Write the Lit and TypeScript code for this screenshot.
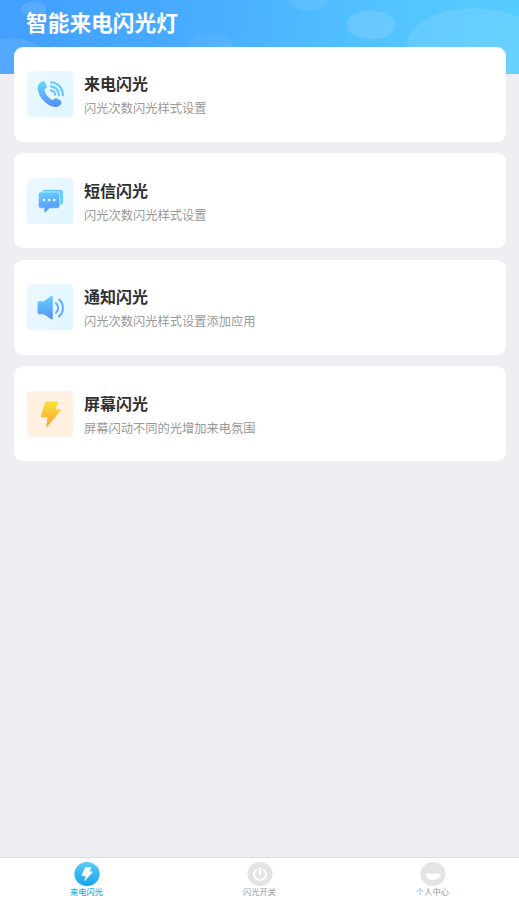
import { LitElement, html, svg, css } from "lit";
import { customElement, property, state } from "lit/decorators.js";
import { classMap } from "lit/directives/class-map.js";

type IconName = "phone" | "message" | "speaker" | "bolt";

const blueGradient = (id: string) => svg`
  <linearGradient id=${id} gradientUnits="userSpaceOnUse" x1="20" y1="9" x2="24" y2="37">
    <stop offset="0" stop-color="#68d9fc"/><stop offset="1" stop-color="#548bfa"/>
  </linearGradient>`;

const icons = {
  phone: svg`
    <defs>${blueGradient("g")}</defs>
    <path fill="url(#g)" d="M15.5 10.5C16.8 10 17.8 10.3 18.2 11.4L19.7 14.7C20.1 16 19.6 17 18.5 17.8C17.4 18.5 17.4 19.3 17.9 20.7C19.2 23.9 21.2 26.4 24 28.3C25.2 29.1 26.2 29 27.1 28.1C28.3 27 29.3 26.9 30.7 27.7L33.5 29.6C34.6 30.3 34.8 31.8 34.1 32.9C32.3 35.7 28.6 36.8 25.3 35.6C18.1 33 11.9 25.8 10.7 18.5C10.1 14.8 12.2 11.7 15.5 10.5Z"/>
    <g fill="none" stroke="#69c9fc" stroke-width="2.3" stroke-linecap="round">
      <path d="M24.2 11.3C30.7 11.5 35.8 17 35.8 24.2"/>
      <path d="M24 15.3C28.5 15.7 31.9 19.3 31.9 24.2"/>
      <path d="M24 19.3C26.4 19.7 28 21.3 28 23.8"/>
    </g>`,
  message: svg`
    <defs>${blueGradient("g")}</defs>
    <path fill="#67cafa" d="M17.7 11.8H33.4Q36 11.8 36 14.4V24Q36 26.6 33.5 26.8L29.5 27L15 18V14.5Q15 11.8 17.7 11.8Z"/>
    <path fill="url(#g)" stroke="#e3f6ff" stroke-width=".6" d="M14 13.9H30.2Q32.8 13.9 32.8 16.5V27.7Q32.8 30.3 30.2 30.3H22.9L18.4 34.3Q17.1 35.3 17.1 33.6V30.3H14Q11.4 30.3 11.4 27.7V16.5Q11.4 13.9 14 13.9Z"/>
    <g fill="#eefbff"><circle cx="16.8" cy="22" r="1.35"/><circle cx="22" cy="22" r="1.35"/><circle cx="27.2" cy="22" r="1.35"/></g>`,
  speaker: svg`
    <defs>${blueGradient("g")}</defs>
    <path fill="url(#g)" d="M12 17.3H16.7L24 12.3Q25.8 11.1 25.8 13V34.2Q25.8 36.2 24 35.1L16.7 30.2H12Q10.5 30.2 10.5 28.7V18.8Q10.5 17.3 12 17.3Z"/>
    <g fill="none" stroke="#65adfb" stroke-width="2.1" stroke-linecap="round">
      <path d="M29 19.2C31.8 21.7 31.8 26.1 29 28.7"/>
      <path d="M32 15.5C37.2 19.7 37.2 28 32 32.4"/>
    </g>`,
  bolt: svg`
    <defs><linearGradient id="g" x1="0" y1="0" x2="0" y2="1">
      <stop offset="0" stop-color="#fce237"/><stop offset="1" stop-color="#fba13b"/>
    </linearGradient></defs>
    <path fill="url(#g)" d="M19.2 10.5H30.8Q31.8 10.5 31.4 11.4L28.6 18.3H33.2Q34.5 18.3 33.7 19.4L20.6 35.3Q19 36.9 19.3 34.9L20.5 26.3H14.8Q13.5 26.3 13.9 25.1L18.1 11.3Q18.4 10.5 19.2 10.5Z"/>`,
};

@customElement("flash-card")
class FlashCard extends LitElement {
  @property() icon: IconName = "phone";
  @property() heading = "";
  @property() note = "";

  static styles = css`
    :host {
      display: flex;
      box-sizing: border-box;
      height: 95.2px;
      padding: 24.3px 13px 0;
      gap: 11px;
      background: #fff;
      border-radius: 9px;
    }
    .tile {
      flex: none;
      width: 46px;
      height: 46px;
      border-radius: 4px;
      background: linear-gradient(135deg, #edf8ff, #e0f5ff);
    }
    .warm { background: #fff0e2; }
    svg { display: block; width: 46px; height: 46px; }
    .copy { display: flex; flex-direction: column; white-space: nowrap; }
    .heading { font-size: 16px; line-height: 24px; font-weight: 700; color: #303030; }
    .note { margin-top: 4px; font-size: 12.25px; line-height: 18px; color: #999; }
  `;

  render() {
    return html`
      <div class=${classMap({ tile: true, warm: this.icon === "bolt" })}>
        <svg viewBox="0 0 46 46">${icons[this.icon]}</svg>
      </div>
      <div class="copy">
        <div class="heading">${this.heading}</div>
        <div class="note">${this.note}</div>
      </div>`;
  }
}

const cards: { icon: IconName; heading: string; note: string }[] = [
  { icon: "phone", heading: "来电闪光", note: "闪光次数闪光样式设置" },
  { icon: "message", heading: "短信闪光", note: "闪光次数闪光样式设置" },
  { icon: "speaker", heading: "通知闪光", note: "闪光次数闪光样式设置添加应用" },
  { icon: "bolt", heading: "屏幕闪光", note: "屏幕闪动不同的光增加来电氛围" },
];

const tabs = [
  {
    label: "来电闪光",
    art: svg`
      <defs><linearGradient id="t" x1="0" y1="0" x2="0" y2="1">
        <stop offset="0" stop-color="#5acbf7"/><stop offset="1" stop-color="#14a5ee"/>
      </linearGradient></defs>
      <ellipse cx="13" cy="12" rx="12.6" ry="12" fill="url(#t)"/>
      <path fill="#fff" stroke="#fff" stroke-width=".8" stroke-linejoin="round" d="M11.3 5.6H16.8L15.2 9.9H18.4L10.8 18.5L11.9 13.6H8Z"/>`,
  },
  {
    label: "闪光开关",
    art: svg`
      <ellipse cx="13" cy="12" rx="12.6" ry="12" fill="#e4e4e4"/>
      <g fill="none" stroke="#fff" stroke-width="1.9" stroke-linecap="round">
        <path d="M9.4 7.7A5.9 5.7 0 1 0 16.6 7.7"/><path d="M13 6V12"/>
      </g>`,
  },
  {
    label: "个人中心",
    art: svg`
      <ellipse cx="13" cy="12" rx="12.6" ry="12" fill="#e4e4e4"/>
      <path fill="#fff" d="M5.8 11.8H20.2Q20.6 11.8 20.5 12.5C20 16 17 18 13 18S6 16 5.5 12.5Q5.4 11.8 5.8 11.8Z"/>`,
  },
];

@customElement("app-root")
class AppRoot extends LitElement {
  @state() active = 0;

  static styles = css`
    :host {
      display: flex;
      flex-direction: column;
      height: 900px;
      overflow: hidden;
      background: #eeeef3;
      font-family: "Noto Sans CJK SC", sans-serif;
    }
    header {
      position: relative;
      flex: none;
      height: 74px;
      background: linear-gradient(97deg, #43a0ff 5%, #48adff 40%, #52c2ff 70%, #57ccff);
    }
    .bubbles { position: absolute; inset: 0; width: 100%; height: 100%; }
    h1 {
      position: relative;
      margin: 0;
      padding: 6px 26px 0;
      font-size: 21.7px;
      line-height: 32px;
      font-weight: 700;
      color: #fff;
    }
    main {
      position: relative;
      flex: 1;
      display: flex;
      flex-direction: column;
      gap: 11.3px;
      margin-top: -27.2px;
      padding: 0 13px 0 14px;
    }
    nav {
      flex: none;
      display: flex;
      box-sizing: border-box;
      height: 43px;
      border-top: 1px solid #dedee1;
      background: #fff;
    }
    .tab {
      flex: 1;
      display: flex;
      flex-direction: column;
      align-items: center;
      padding-top: 4px;
      font-size: 8.2px;
      line-height: 12px;
      color: #999;
      cursor: pointer;
    }
    .tab svg { width: 26px; height: 24px; }
    .tab span { margin-top: -1px; }
    .active { color: #38a9ee; font-weight: 500; }
  `;

  render() {
    return html`
      <header>
        <svg class="bubbles" viewBox="0 0 519 74" preserveAspectRatio="none" fill="#fff" fill-opacity=".12">
          <ellipse cx="33.5" cy="9" rx="12.5" ry="7.5"/>
          <ellipse cx="12" cy="58" rx="32" ry="20" fill-opacity=".09"/>
          <ellipse cx="211" cy="45" rx="22" ry="12" fill-opacity=".06"/>
          <ellipse cx="309" cy="0" rx="20" ry="10.5" fill-opacity=".08"/>
          <ellipse cx="371" cy="25" rx="24.5" ry="14.5"/>
          <ellipse cx="474" cy="45" rx="67" ry="37" fill-opacity=".1"/>
        </svg>
        <h1>智能来电闪光灯</h1>
      </header>
      <main>
        ${cards.map((c) => html`<flash-card .icon=${c.icon} .heading=${c.heading} .note=${c.note}></flash-card>`)}
      </main>
      <nav>
        ${tabs.map((t, i) => html`
          <div class=${classMap({ tab: true, active: i === this.active })} @click=${() => (this.active = i)}>
            <svg viewBox="0 0 26 24">${t.art}</svg>
            <span>${t.label}</span>
          </div>`)}
      </nav>`;
  }
}
